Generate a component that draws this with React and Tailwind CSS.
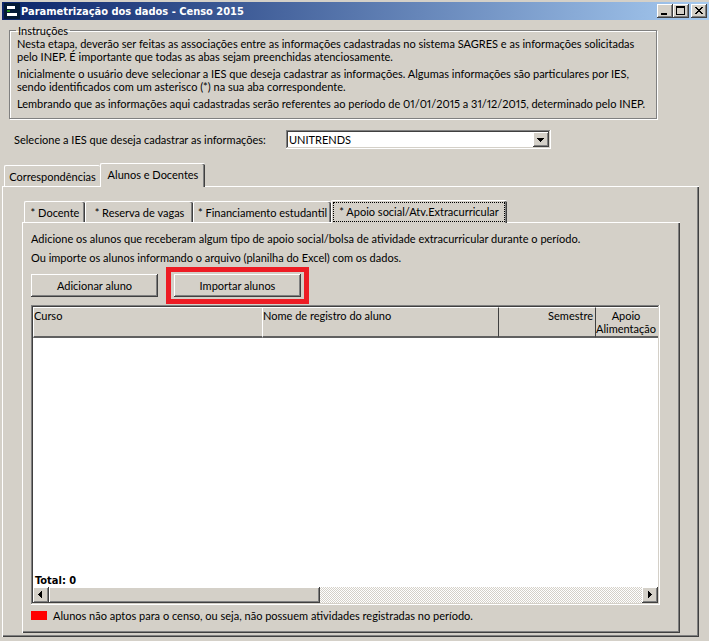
import React, { useState } from "react";

// --- Classic bevels, outer edge first ---
const raised =
  "bg-[#d4d0c8] shadow-[inset_-1px_-1px_0_#404040,inset_1px_1px_0_#fff,inset_-2px_-2px_0_#808080]";
const sunken =
  "shadow-[inset_-1px_-1px_0_#fff,inset_1px_1px_0_#808080,inset_-2px_-2px_0_#d4d0c8,inset_2px_2px_0_#404040]";
const tabEdge =
  "rounded-t-[2px] border-t border-l border-white bg-[#d4d0c8] whitespace-nowrap";
const tabShade = "shadow-[inset_-1px_0_0_#404040,inset_-2px_0_0_#808080]";
const boldFont = "font-['DejaVu_Sans_Condensed','DejaVu_Sans',sans-serif] font-bold";

const Arrow = ({ points }) => (
  <svg viewBox="0 0 16 16" className="size-4" shapeRendering="crispEdges" aria-hidden="true">
    <path d={points} fill="#000" />
  </svg>
);

const TitleBar = () => (
  <header className="mt-[2px] ml-[2px] flex h-[18px] items-center bg-linear-to-r/srgb from-[#0a246a] to-[#a6caf0] pl-[2px]">
    <svg viewBox="0 0 16 18" className="h-[18px] w-4" shapeRendering="crispEdges" aria-hidden="true">
      <path d="M0 1h16v16H0z" fill="#031a35" />
      <path d="M3 4h8v3H3zM3 11h10v3H3z" fill="#fff" />
      <path d="M3 8h3v2H3z" fill="#1b8a1b" />
    </svg>
    <h1 className={`ml-px flex-1 text-white ${boldFont}`}>
      Parametrização dos dados - Censo 2015
    </h1>
    <button aria-label="Minimizar" className={`h-[14px] w-4 ${raised}`}>
      <svg viewBox="0 0 16 14" className="h-[14px] w-4" shapeRendering="crispEdges">
        <path d="M4 9h6v2H4z" />
      </svg>
    </button>
    <button aria-label="Maximizar" className={`h-[14px] w-4 ${raised}`}>
      <svg viewBox="0 0 16 14" className="h-[14px] w-4" shapeRendering="crispEdges">
        <path d="M3 2h9v9H3zM4 4v6h7V4z" fillRule="evenodd" />
      </svg>
    </button>
    <button aria-label="Fechar" className={`mr-[2px] ml-[2px] h-[14px] w-4 ${raised}`}>
      <svg viewBox="0 0 16 14" className="h-[14px] w-4" shapeRendering="crispEdges">
        <path d="M4 3h2v1h1v1h2V4h1V3h2v1h-1v1h-1v1H9v1h1v1h1v1h1v1h-2V9H9V8H7v1H6v1H4V9h1V8h1V7h1V6H6V5H5V4H4z" />
      </svg>
    </button>
  </header>
);

const Instructions = () => (
  <fieldset className="mt-1 mr-[52px] ml-[9px] border border-[#808080] pb-2 pl-[7px] proportional-nums shadow-[1px_1px_0_#fff,inset_1px_1px_0_#fff]">
    <legend className="-ml-px h-[13px] px-[2px]">Instruções</legend>
    <p>
      Nesta etapa, deverão ser feitas as associações entre as informações cadastradas no sistema SAGRES e as informações solicitadas
      <br />
      pelo INEP. É importante que todas as abas sejam preenchidas atenciosamente.
    </p>
    <p className="mt-1">
      Inicialmente o usuário deve selecionar a IES que deseja cadastrar as informações. Algumas informações são particulares por IES,
      <br />
      sendo identificados com um asterisco (*) na sua aba correspondente.
    </p>
    <p className="mt-1">
      Lembrando que as informações aqui cadastradas serão referentes ao período de 01/01/2015 a 31/12/2015, determinado pelo INEP.
    </p>
  </fieldset>
);

const StudentsTable = () => {
  const cell = "border-t border-l border-t-white border-b-2 border-b-[#606060] py-px align-top font-normal";
  return (
    <div className={`mt-px flex flex-1 flex-col bg-white p-[2px] ${sunken}`}>
      <table className="w-full table-fixed border-separate border-spacing-0 bg-[#d4d0c8]">
        <thead>
          <tr className="h-[30px]">
            <th className={`w-[229px] border-l-white text-left ${cell}`}>Curso</th>
            <th className={`border-l-white text-left ${cell}`}>Nome de registro do aluno</th>
            <th className={`w-[97px] border-l-[#404040] pr-[2px] text-right ${cell}`}>Semestre</th>
            <th className={`w-[63px] border-l-[#404040] pr-[2px] text-center ${cell}`}>
              Apoio
              <br />
              Alimentação
            </th>
          </tr>
        </thead>
        <tbody></tbody>
      </table>
      <div className="flex-1" />
      <p className={`px-[2px] ${boldFont}`}>Total: 0</p>
      <div className="flex h-4 bg-[conic-gradient(#fff_25%,#d4d0c8_0_50%,#fff_0_75%,#d4d0c8_0)] bg-[length:2px_2px]">
        <button aria-label="Rolar para a esquerda" className={`w-4 ${raised}`}>
          <Arrow points="M9 4v7H8v-1H7V9H6V8H5V7h1V6h1V5h1V4z" />
        </button>
        <div className={`w-[271px] ${raised}`} />
        <button aria-label="Rolar para a direita" className={`ml-auto w-4 ${raised}`}>
          <Arrow points="M6 4v7h1v-1h1V9h1V8h1V7H9V6H8V5H7V4z" />
        </button>
      </div>
    </div>
  );
};

const innerTabs = [
  { name: "* Docente", width: "w-[61px]" },
  { name: "* Reserva de vagas", width: "w-[108px]" },
  { name: "* Financiamento estudantil", width: "w-[138px]" },
  { name: "* Apoio social/Atv.Extracurricular", width: "w-[176px]" },
];

const App = () => {
  const [outer, setOuter] = useState("Alunos e Docentes");
  const [inner, setInner] = useState(innerTabs[3].name);

  return (
    <div className="flex min-h-screen flex-col overflow-hidden bg-[#d4d0c8] pb-1 font-['Lato',sans-serif] text-[11px] leading-[13px] text-black">
      <TitleBar />
      <Instructions />

      {/* School picker */}
      <div className="mt-[11px] flex items-center pl-[14px]">
        <label htmlFor="ies" className="w-[272px]">
          Selecione a IES que deseja cadastrar as informações:
        </label>
        <div className="relative w-[265px]">
          <select id="ies" className={`block h-[19px] w-full appearance-none bg-white px-[3px] ${sunken}`}>
            <option>UNITRENDS</option>
          </select>
          <span className={`pointer-events-none absolute top-[2px] right-[2px] h-[15px] w-4 ${raised}`}>
            <Arrow points="M4 6h7v1h-1v1H9v1H8v1H7V9H6V8H5V7H4z" />
          </span>
        </div>
      </div>

      {/* Outer tabs */}
      <div role="tablist" className="mt-[14px] flex items-end pl-1">
        {["Correspondências", "Alunos e Docentes"].map((name) => (
          <button
            key={name}
            role="tab"
            aria-selected={outer === name}
            onClick={() => setOuter(name)}
            className={`${tabEdge} ${
              outer === name ? `relative -mb-px h-6 w-[105px] pb-[2px] ${tabShade}` : "h-[21px] w-24"
            }`}
          >
            {name}
          </button>
        ))}
      </div>

      <main className="mr-[10px] ml-[2px] flex flex-1 flex-col border-t border-l border-white pt-[13px] pr-[19px] pb-1 pl-[19px] shadow-[inset_-1px_-1px_0_#404040,inset_-2px_-2px_0_#808080]">
        {/* Inner tabs */}
        <div role="tablist" className="flex items-end pl-[2px]">
          {innerTabs.map((tab) => (
            <button
              key={tab.name}
              role="tab"
              aria-selected={inner === tab.name}
              onClick={() => setInner(tab.name)}
              className={`${tabEdge} ${tabShade} ${tab.width} ${
                inner === tab.name ? "relative -mb-px h-[23px] p-px pr-[2px]" : "h-[21px]"
              }`}
            >
              {inner === tab.name ? (
                <span className="block h-full border border-dotted border-black pt-[2px]">{tab.name}</span>
              ) : (
                tab.name
              )}
            </button>
          ))}
        </div>

        <section className="flex flex-1 flex-col border-t border-l border-white pt-[9px] pr-5 pb-[11px] pl-2 shadow-[inset_-1px_-1px_0_#404040,inset_-2px_-2px_0_#808080]">
          <p>Adicione os alunos que receberam algum tipo de apoio social/bolsa de atividade extracurricular durante o período.</p>
          <p className="mt-[6px]">Ou importe os alunos informando o arquivo (planilha do Excel) com os dados.</p>

          <div className="mt-[3px] flex items-center gap-2">
            <button className={`h-[23px] w-[127px] ${raised}`}>Adicionar aluno</button>
            <div className="border-[5px] border-[#ed1c24] px-[3px] py-[2px]">
              <button className={`block h-[23px] w-[127px] ${raised}`}>Importar alunos</button>
            </div>
          </div>

          <StudentsTable />

          <div className="mt-1 flex items-center">
            <span className="mr-[6px] h-[9px] w-4 bg-[#ff0000]" />
            <p>Alunos não aptos para o censo, ou seja, não possuem atividades registradas no período.</p>
          </div>
        </section>
      </main>
    </div>
  );
};

export default App;
